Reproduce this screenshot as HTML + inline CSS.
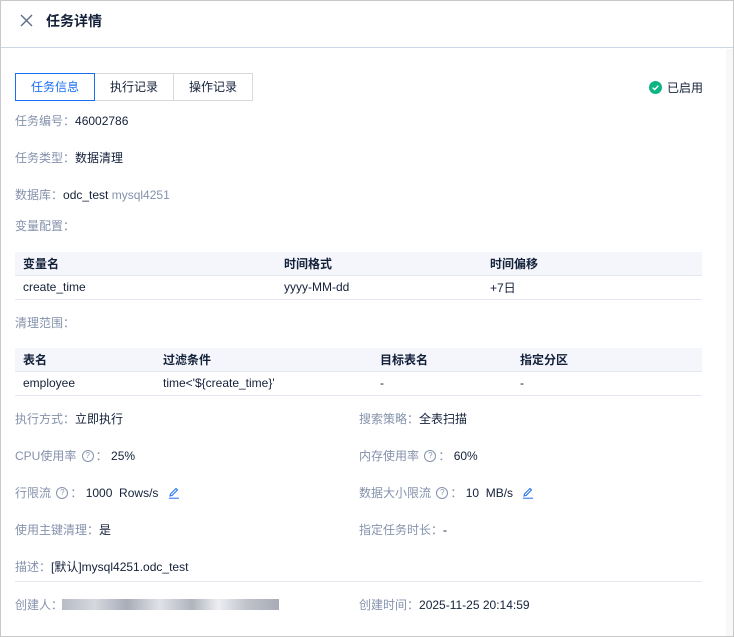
<!DOCTYPE html>
<html><head><meta charset="utf-8"><style>
*{box-sizing:border-box;margin:0;padding:0}
body{width:734px;height:637px;overflow:hidden;background:#fff;font-family:"Liberation Sans","Noto Sans CJK SC",sans-serif;font-size:12px;color:#132039;position:relative}
.frame{position:absolute;left:0;top:0;width:734px;height:637px;border:1px solid #c8c8c8}
.hdr{position:absolute;left:1px;top:1px;width:732px;height:47px;border-bottom:1px solid #cdd4e4}
.title{position:absolute;left:45px;top:10px;font-size:14px;font-weight:bold;color:#132039}
.sb{position:absolute;left:726px;top:49px;width:7px;height:587px;background:#f8f8f8}
.abs{position:absolute;white-space:nowrap;line-height:16px}
.l{color:#8592ad}
.tabs{position:absolute;left:15px;top:73px;height:28px;display:flex}
.tab{height:28px;line-height:26px;text-align:center;border:1px solid #d9d9d9;margin-left:-1px;color:#132039}
.tab.a{border-color:#1a6ef6;color:#1a6ef6;position:relative;z-index:1;margin-left:0}
table{position:absolute;left:15px;width:687px;border-collapse:collapse}
td,th{text-align:left;padding:0 8px;height:24px;border-bottom:1px solid #e3e7ef;font-weight:normal}
th{background:#f4f6fc;font-weight:bold;height:23px}
.q{display:inline-block;width:12px;height:12px;border:1px solid #8592ad;border-radius:50%;font-size:8px;line-height:10px;text-align:center;color:#8592ad;vertical-align:middle;margin:-2px 2px 0}
</style></head><body>
<div class="frame"></div>
<div class="hdr">
<svg style="position:absolute;left:19px;top:13px" width="13" height="13" viewBox="0 0 13 13"><path d="M1 1L12 12M12 1L1 12" stroke="#5c6b8a" stroke-width="1.4"/></svg>
<div class="title">任务详情</div>
</div>
<div class="sb"></div>
<div class="tabs"><div class="tab a" style="width:80px">任务信息</div><div class="tab" style="width:80px">执行记录</div><div class="tab" style="width:80px">操作记录</div></div>
<svg class="abs" style="left:649px;top:81px" width="13" height="13" viewBox="0 0 13 13"><circle cx="6.5" cy="6.5" r="6.5" fill="#0eb582"/><path d="M3.6 6.6L5.7 8.6L9.4 4.6" stroke="#fff" stroke-width="1.4" fill="none"/></svg>
<div class="abs" style="left:667px;top:80px">已启用</div>
<div class="abs" style="left:15px;top:113px"><span class="l">任务编号：</span>46002786</div>
<div class="abs" style="left:15px;top:150px"><span class="l">任务类型：</span>数据清理</div>
<div class="abs" style="left:15px;top:187px"><span class="l">数据库：</span>odc_test <span class="l">mysql4251</span></div>
<div class="abs l" style="left:15px;top:218px">变量配置：</div>
<table style="top:252px"><tr><th style="width:261px">变量名</th><th style="width:206px">时间格式</th><th>时间偏移</th></tr>
<tr><td>create_time</td><td>yyyy-MM-dd</td><td>+7日</td></tr></table>
<div class="abs l" style="left:15px;top:315px">清理范围：</div>
<table style="top:348px"><tr><th style="width:140px">表名</th><th style="width:217px">过滤条件</th><th style="width:140px">目标表名</th><th>指定分区</th></tr>
<tr><td>employee</td><td>time&lt;'${create_time}'</td><td>-</td><td>-</td></tr></table>
<div class="abs" style="left:15px;top:411px"><span class="l">执行方式：</span>立即执行</div>
<div class="abs" style="left:359px;top:411px"><span class="l">搜索策略：</span>全表扫描</div>
<div class="abs" style="left:15px;top:448px"><span class="l">CPU使用率 <span class="q">?</span>：</span> 25%</div>
<div class="abs" style="left:359px;top:448px"><span class="l">内存使用率 <span class="q">?</span>：</span> 60%</div>
<div class="abs" style="left:15px;top:485px"><span class="l">行限流 <span class="q">?</span>：</span> 1000&nbsp; Rows/s <svg width="12" height="12" viewBox="0 0 12 12" style="vertical-align:-2px;margin-left:6px"><path d="M2 9L2.5 7L8 1.5L9.5 3L4 8.5Z" stroke="#1a6ef6" fill="none"/><path d="M1 11.2H11" stroke="#1a6ef6"/></svg></div>
<div class="abs" style="left:359px;top:485px"><span class="l">数据大小限流 <span class="q">?</span>：</span> 10&nbsp; MB/s <svg width="12" height="12" viewBox="0 0 12 12" style="vertical-align:-2px;margin-left:6px"><path d="M2 9L2.5 7L8 1.5L9.5 3L4 8.5Z" stroke="#1a6ef6" fill="none"/><path d="M1 11.2H11" stroke="#1a6ef6"/></svg></div>
<div class="abs" style="left:15px;top:522px"><span class="l">使用主键清理：</span>是</div>
<div class="abs" style="left:359px;top:522px"><span class="l">指定任务时长：</span>-</div>
<div class="abs" style="left:15px;top:559px"><span class="l">描述：</span>[默认]mysql4251.odc_test</div>
<div style="position:absolute;left:15px;top:581px;width:687px;height:1px;background:#e3e7ef"></div>
<div class="abs l" style="left:15px;top:597px">创建人：</div>
<div style="position:absolute;left:62px;top:599px;width:217px;height:11px;background:linear-gradient(90deg,#b8bcc6 0,#d6d8de 15%,#a9adb8 30%,#e0e2e7 45%,#b0b4be 60%,#eceef1 72%,#c0c3cb 85%,#a8acb6 100%)"></div>
<div class="abs" style="left:359px;top:597px"><span class="l">创建时间：</span>2025-11-25 20:14:59</div>
</body></html>
